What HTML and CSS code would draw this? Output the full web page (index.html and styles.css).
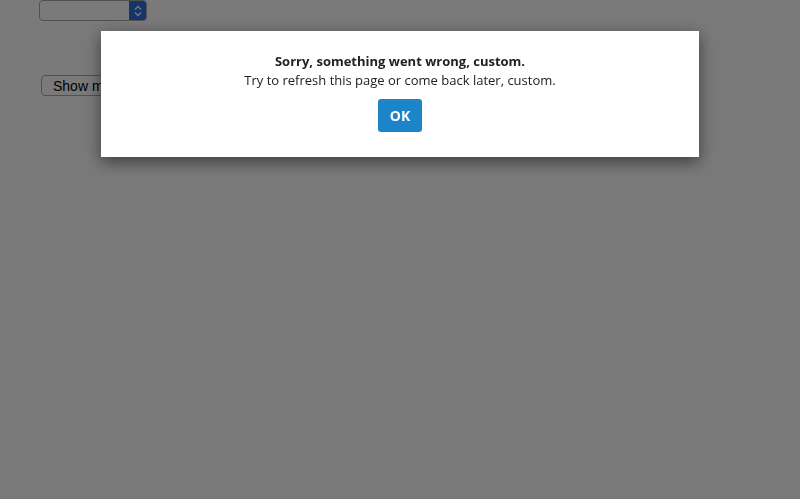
FILE: index.html
```html
<!DOCTYPE html>
<html>
<head>
<meta charset="utf-8">
<link rel="stylesheet" href="styles.css">
</head>
<body>
<div class="page">
  <div class="select"><span class="select-field"></span><span class="select-arrow"><svg width="8" height="12" viewBox="0 0 8 12"><path d="M1 4.5 L4 1.5 L7 4.5 M1 7.5 L4 10.5 L7 7.5" fill="none" stroke="#fff" stroke-width="1.3"/></svg></span></div>
  <button class="show-more">Show more</button>
</div>
<div class="overlay"></div>
<div class="modal">
  <div class="modal-title">Sorry, something went wrong, custom.</div>
  <div class="modal-text">Try to refresh this page or come back later, custom.</div>
  <button class="ok">OK</button>
</div>
</body>
</html>
```
FILE: styles.css
```css
html, body { margin: 0; padding: 0; height: 100%; background: #fff; }
body { font-family: "Liberation Sans", Arial, sans-serif; }
.page { padding: 0 0 0 39px; display: flex; flex-direction: column; align-items: flex-start; }
.select { display: flex; width: 108px; height: 21px; box-sizing: border-box; border: 1px solid #aaa; border-radius: 4px; overflow: hidden; background: #fff; }
.select-field { flex: 1; }
.select-arrow { width: 17px; background: #2f6fe0; display: flex; align-items: center; justify-content: center; }
.show-more { margin: 54px 0 0 2px; height: 21px; padding: 0 11px; font-family: "Liberation Sans", Arial, sans-serif; font-size: 14px; color: #000; background: #fff; border: 1px solid #aaa; border-radius: 4px; }
.overlay { position: fixed; inset: 0; background: rgba(0,0,0,0.52); }
.modal { position: absolute; left: 101px; top: 31px; width: 598px; height: 126px; box-sizing: border-box; background: #fff; box-shadow: 0 5px 15px rgba(0,0,0,0.5); display: flex; flex-direction: column; align-items: center; padding-top: 21px; font-family: "Open Sans", sans-serif; color: #222; }
.modal-title { font-weight: 700; font-size: 13px; line-height: 19px; }
.modal-text { font-size: 13px; line-height: 19px; }
.ok { margin-top: 9px; width: 44px; height: 33px; border: 0; border-radius: 3px; background: #1c84c9; color: #fff; font-family: "Open Sans", sans-serif; font-weight: 700; font-size: 14px; padding: 0; }
```
